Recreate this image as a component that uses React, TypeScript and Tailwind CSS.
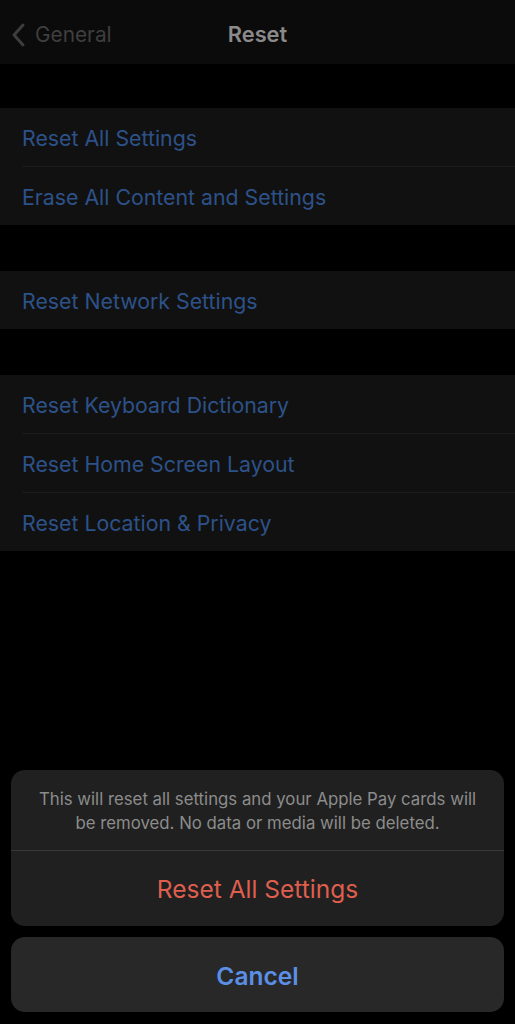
import React from 'react';

type Group = string[];

const groups: Group[] = [
  ['Reset All Settings', 'Erase All Content and Settings'],
  ['Reset Network Settings'],
  ['Reset Keyboard Dictionary', 'Reset Home Screen Layout', 'Reset Location & Privacy'],
];

const SettingsGroup: React.FC<{ items: Group }> = ({ items }) => (
  <div className="bg-[#111111]">
    {items.map((label, i) => (
      <div key={label}>
        {i > 0 && <div className="ml-[22px] h-px bg-[#1c1c1c]" />}
        <div className="flex h-[58px] items-center pl-[22px] pt-[3px] text-[21.3px] text-[#2d5289]">{label}</div>
      </div>
    ))}
  </div>
);

const App: React.FC = () => {
  return (
    <div
      className="relative flex h-[1024px] w-[515px] flex-col overflow-hidden bg-black"
      style={{ fontFamily: 'Inter, "Noto Sans", sans-serif' }}
    >
      {/* nav bar */}
      <div className="relative flex h-16 items-center justify-center bg-[#0b0b0b] pt-[5px]">
        <div className="absolute left-[11px] top-0 flex h-16 items-center gap-[9px] pt-[5px]">
          <svg width="15" height="26" viewBox="0 0 15 26" fill="none">
            <path d="M12 3 L3 13 L12 23" stroke="#3d3d3d" strokeWidth="3" strokeLinecap="round" strokeLinejoin="round" />
          </svg>
          <span className="text-[20.8px] text-[#3f3f3f]">General</span>
        </div>
        <span className="text-[21.8px] font-semibold text-[#8a8a8a]">Reset</span>
      </div>

      <div className="mt-[44px] flex flex-col gap-[46px]">
        {groups.map((g, i) => (
          <SettingsGroup key={i} items={g} />
        ))}
      </div>

      {/* action sheet */}
      <div className="absolute bottom-[12px] left-[11px] right-[11px] flex flex-col gap-[11px]">
        <div className="overflow-hidden rounded-[14px] bg-[#202020]">
          <div className="px-6 pb-[15px] pt-[17px] text-center text-[16.8px] leading-[24px] text-[#8c8c8c]">
            This will reset all settings and your Apple Pay cards will be removed. No data or media will be deleted.
          </div>
          <div className="h-px bg-[#383838]" />
          <div className="flex h-[75px] items-center justify-center pt-[2px] text-[24.5px] text-[#df5e4e]">Reset All Settings</div>
        </div>
        <div className="flex h-[75px] items-center justify-center rounded-[14px] bg-[#282828] pt-[3px] text-[24.5px] font-semibold text-[#5b8fe6]">
          Cancel
        </div>
      </div>
    </div>
  );
};

export default App;
